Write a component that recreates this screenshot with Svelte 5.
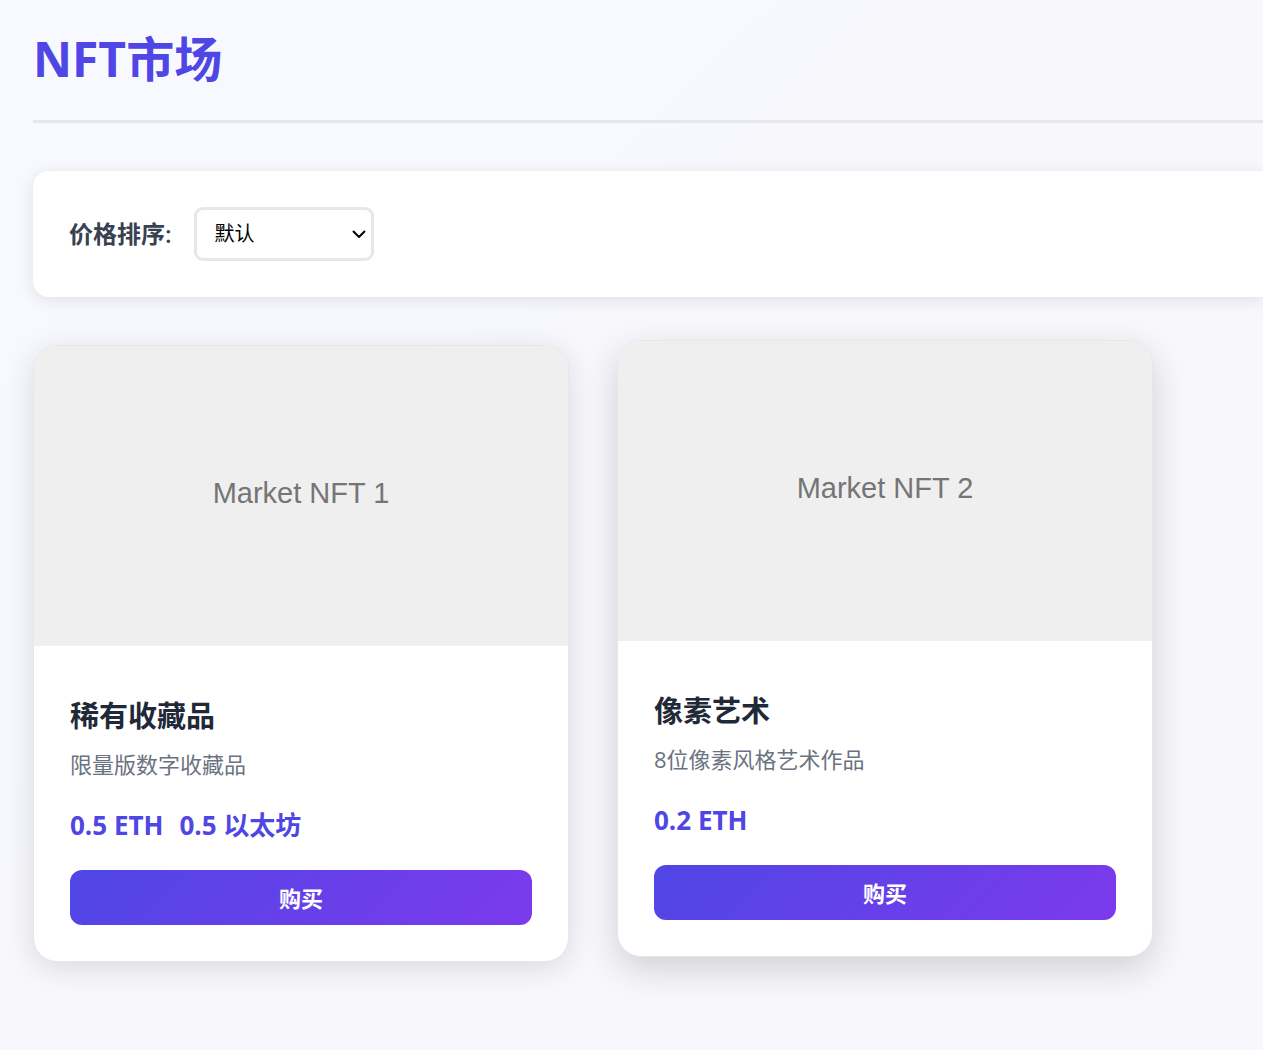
<script>
  let sort = $state('default');
  const items = [
    { title: '稀有收藏品', text: '限量版数字收藏品', price: ['0.5 ETH', '0.5 以太坊'], image: 'Market NFT 1', raised: false },
    { title: '像素艺术', text: '8位像素风格艺术作品', price: ['0.2 ETH'], image: 'Market NFT 2', raised: true }
  ];
</script>

<main>
  <header><h1>NFT市场</h1></header>
  <section class="filters">
    <label for="sort">价格排序:</label>
    <div class="select">
      <select id="sort" bind:value={sort}>
        <option value="default">默认</option>
        <option value="asc">价格从低到高</option>
        <option value="desc">价格从高到低</option>
      </select>
      <svg viewBox="0 0 14 8" aria-hidden="true"><path d="M1 1l6 6 6-6" /></svg>
    </div>
  </section>
  <section class="grid">
    {#each items as item}
      <article class:raised={item.raised}>
        <div class="image">{item.image}</div>
        <div class="body">
          <h2>{item.title}</h2>
          <p class="text">{item.text}</p>
          <p class="price">{#each item.price as p}<span>{p}</span>{/each}</p>
          <button type="button">购买</button>
        </div>
      </article>
    {/each}
  </section>
</main>

<style>
  :global(body) {
    background: linear-gradient(135deg, #f7f9fe 0%, #f7f9fe 33%, #f7f7fc 40%, #f7f7fc 100%);
    min-height: 100vh;
    overflow-x: hidden;
  }
  :global(*) { box-sizing: border-box; }
  main {
    font-family: "Open Sans", "Noto Sans CJK SC", sans-serif;
    color: #1f2937;
    padding: 23px 0 48px 33px;
  }
  header { border-bottom: 3px solid #e5e7eb; padding-bottom: 26px; margin-bottom: 48px; }
  h1 { margin: 0; font-size: 48px; line-height: 71px; font-weight: 700; color: #4f46e5; }
  .filters {
    display: flex;
    align-items: center;
    gap: 22px;
    padding: 36px;
    margin-bottom: 48px;
    background: #fff;
    border-radius: 16px 0 0 16px;
    box-shadow: 0 3px 16px rgba(0, 0, 0, 0.1);
  }
  label { font-size: 24px; line-height: 36px; font-weight: 600; color: #374151; }
  .select { position: relative; width: 180px; }
  select {
    appearance: none;
    display: block;
    width: 100%;
    height: 54px;
    padding: 0 18px;
    border: 3px solid #e5e7eb;
    border-radius: 9px;
    background: #fff;
    color: #000;
    font: 20px/30px "Open Sans", "Noto Sans CJK SC", sans-serif;
  }
  .select svg {
    position: absolute;
    right: 8px;
    top: 23px;
    width: 14px;
    height: 8px;
    fill: none;
    stroke: #000;
    stroke-width: 2;
    pointer-events: none;
  }
  .grid { display: grid; grid-template-columns: repeat(auto-fill, minmax(500px, 536px)); gap: 48px; }
  article {
    background: #fff;
    border: 1px solid #e5e7eb;
    border-radius: 24px;
    overflow: hidden;
    box-shadow: 0 6px 30px rgba(0, 0, 0, 0.12);
  }
  .raised { transform: translateY(-5px); box-shadow: 0 12px 36px rgba(0, 0, 0, 0.16); }
  .image {
    display: grid;
    place-items: center;
    height: 300px;
    padding-bottom: 6px;
    background: #efefef;
    color: #757575;
    font: 29px/36px "Liberation Sans", sans-serif;
  }
  .body { padding: 48px 36px 36px; }
  h2 { margin: 0 0 8px; font-size: 29px; line-height: 43px; font-weight: 700; }
  .text { margin: 0 0 22px; font-size: 22px; line-height: 38px; color: #6b7280; }
  .price { display: flex; gap: 16px; margin: 0 0 24px; font-size: 26px; line-height: 41px; font-weight: 700; color: #4f46e5; }
  button {
    display: block;
    width: 100%;
    height: 55px;
    border: 0;
    border-radius: 12px;
    background: linear-gradient(135deg, #4f46e5, #7c3aed);
    color: #fff;
    font: 700 22px/32px "Open Sans", "Noto Sans CJK SC", sans-serif;
  }
</style>
